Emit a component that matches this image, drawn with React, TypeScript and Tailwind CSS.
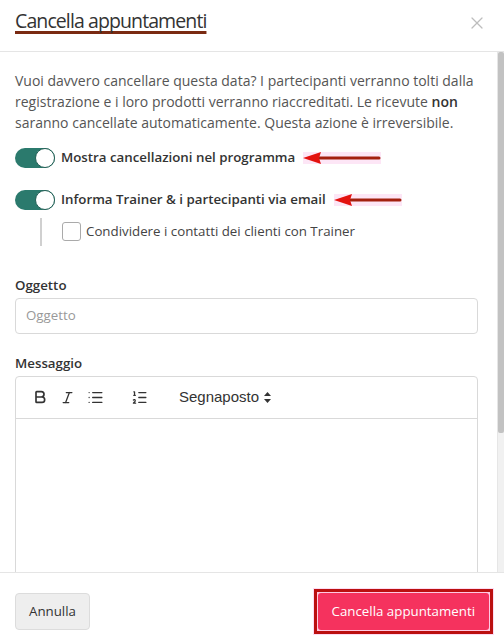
import React from 'react';
import { Bold, Italic, List, ListOrdered, X } from 'lucide-react';

const Toggle: React.FC = () => (
  <span className="flex h-5 w-10 shrink-0 items-center justify-end rounded-full bg-[#2b7a6d]">
    <span className="h-5 w-5 rounded-full border-[1.5px] border-[#235f55] bg-white" />
  </span>
);

// red annotation arrow pointing left
const Arrow: React.FC<{ width: number }> = ({ width }) => (
  <svg width={width} height="14" viewBox={`0 0 ${width} 14`} className="shrink-0">
    <rect x="0" y="1" width={width} height="12" fill="#fde6f6" />
    <line x1="14" y1="7" x2={width - 2} y2="7" stroke="#a3200e" strokeWidth="3" strokeLinecap="round" />
    <polygon points={`0,7 18,1 16,7 18,13`} fill="#e3120f" />
  </svg>
);

const App: React.FC = () => {
  return (
    <div
      className="flex h-[644px] w-[504px] flex-col overflow-hidden bg-white text-[#333]"
      style={{ fontFamily: '"Open Sans", "Liberation Sans", sans-serif' }}
    >
      {/* Header */}
      <div className="flex h-[52px] shrink-0 items-start justify-between border-b border-[#e5e5e5] pl-[15px] pr-[17px] pt-[7px]">
        <h1 className="text-[19.5px] font-normal leading-[28px] tracking-[-0.9px] text-[#333]">
          <span className="underline decoration-[#7a2a12] decoration-[3px] underline-offset-[3px] [text-decoration-skip-ink:none]">
            Cancella appuntamenti
          </span>
        </h1>
        <button className="mt-[6px] text-[#bdbdbd]" aria-label="Chiudi">
          <X size={20} strokeWidth={1.5} />
        </button>
      </div>

      {/* Body */}
      <div className="flex min-h-0 flex-1">
        <div className="min-w-0 flex-1 overflow-hidden pl-[15px] pr-[19px]">
          <p className="mt-[18px] text-[14px] leading-[21px] text-[#555]">
            Vuoi davvero cancellare questa data? I partecipanti verranno tolti dalla registrazione e i loro prodotti
            verranno riaccreditati. Le ricevute <b className="font-semibold text-[#333]">non</b> saranno
            cancellate automaticamente. Questa azione è irreversibile.
          </p>

          <div className="mt-[15px] flex items-center gap-[6px]">
            <Toggle />
            <span className="text-[13.3px] font-semibold">Mostra cancellazioni nel programma</span>
            <span className="ml-[2px]">
              <Arrow width={78} />
            </span>
          </div>

          <div className="mt-[22px] flex items-center gap-[6px]">
            <Toggle />
            <span className="text-[13.3px] font-semibold">Informa Trainer &amp; i partecipanti via email</span>
            <span className="ml-[2px]">
              <Arrow width={68} />
            </span>
          </div>

          <div className="ml-[25px] mt-[8px] flex items-center gap-[5px] border-l-2 border-[#d0d0d0] py-[4px] pl-[20px]">
            <span className="h-[19px] w-[19px] rounded-[3px] border border-[#aaa] bg-white" />
            <span className="text-[13.3px] text-[#444]">Condividere i contatti dei clienti con Trainer</span>
          </div>

          <label className="mt-[29px] block text-[13.3px] font-semibold leading-[20px]">Oggetto</label>
          <div className="mt-[3px] flex h-[36px] items-center rounded-[4px] border border-[#d9d9d9] px-[10px] text-[13.3px] text-[#999]">
            Oggetto
          </div>

          <label className="mt-[19px] block text-[13.3px] font-semibold leading-[20px]">Messaggio</label>
          <div className="mt-[3px] h-[260px] rounded-[4px] border border-[#d9d9d9]">
            <div
              className="flex h-[42px] items-center border-b border-[#d9d9d9] text-[#333]"
              style={{ fontFamily: '"Liberation Sans", Arial, sans-serif' }}
            >
              <Bold size={16} strokeWidth={2.5} className="ml-[16px]" />
              <Italic size={15} strokeWidth={2} className="ml-[12px]" />
              <List size={17} strokeWidth={1.8} className="ml-[12px]" />
              <ListOrdered size={17} strokeWidth={1.8} className="ml-[27px]" />
              <span className="ml-[31px] flex items-center gap-[5px] text-[15px]">
                Segnaposto
                <svg width="7" height="11" viewBox="0 0 7 11">
                  <polygon points="3.5,0 7,4 0,4" fill="#333" />
                  <polygon points="0,7 7,7 3.5,11" fill="#333" />
                </svg>
              </span>
            </div>
          </div>
        </div>

        {/* scrollbar */}
        <div className="flex w-[7px] shrink-0 flex-col border-l border-[#e6e6e6] bg-[#f1f1f1]">
          <div className="h-[381px] rounded-[2px] bg-[#c2c2c2]" />
        </div>
      </div>

      {/* Footer */}
      <div className="flex h-[72px] shrink-0 items-center justify-between border-t border-[#e5e5e5] pl-[15px] pr-[10px] pt-[6px]">
        <button className="h-[37px] rounded-[4px] border border-[#dcdcdc] bg-[#eeeeee] px-[13px] text-[13.3px] text-[#333]">
          Annulla
        </button>
        <span className="bg-[#fddcf3] p-[1px]">
          <span className="block border-[3px] border-[#bb1010] bg-[#ffc9e2] p-[1px]">
            <button className="block h-[37px] rounded-[3px] bg-[#f5325e] px-[14px] text-[13.3px] text-white">
              Cancella appuntamenti
            </button>
          </span>
        </span>
      </div>
    </div>
  );
};

export default App;
